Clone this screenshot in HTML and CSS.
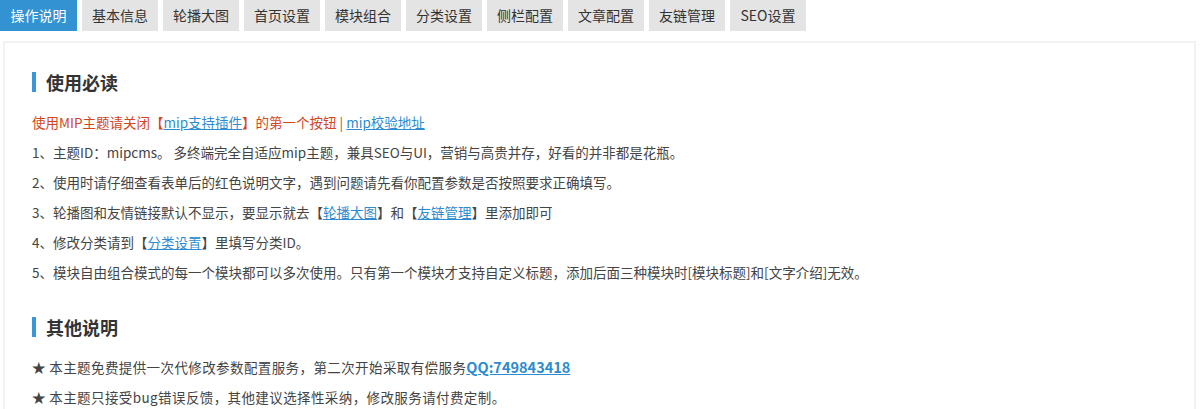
FILE: index.html
```html
<!DOCTYPE html>
<html>
<head>
    <meta charset="utf-8">
    <title>主题设置</title>
    <link rel="stylesheet" href="styles.css">
</head>
<body>
    <div class="tabs">
        <a class="tab active">操作说明</a>
        <a class="tab">基本信息</a>
        <a class="tab">轮播大图</a>
        <a class="tab">首页设置</a>
        <a class="tab">模块组合</a>
        <a class="tab">分类设置</a>
        <a class="tab">侧栏配置</a>
        <a class="tab">文章配置</a>
        <a class="tab">友链管理</a>
        <a class="tab">SEO设置</a>
    </div>
    <div class="panel">
        <h3 class="title">使用必读</h3>
        <p class="warn">使用MIP主题请关闭【<a href="#">mip支持插件</a>】的第一个按钮 | <a href="#">mip校验地址</a></p>
        <p>1、主题ID：mipcms。 多终端完全自适应mip主题，兼具SEO与UI，营销与高贵并存，好看的并非都是花瓶。</p>
        <p>2、使用时请仔细查看表单后的红色说明文字，遇到问题请先看你配置参数是否按照要求正确填写。</p>
        <p>3、轮播图和友情链接默认不显示，要显示就去【<a href="#">轮播大图</a>】和【<a href="#">友链管理</a>】里添加即可</p>
        <p>4、修改分类请到【<a href="#">分类设置</a>】里填写分类ID。</p>
        <p>5、模块自由组合模式的每一个模块都可以多次使用。只有第一个模块才支持自定义标题，添加后面三种模块时[模块标题]和[文字介绍]无效。</p>

        <h3 class="title second">其他说明</h3>
        <p class="note">★ 本主题免费提供一次代修改参数配置服务，第二次开始采取有偿服务<a class="qq" href="#">QQ:749843418</a></p>
        <p class="note">★ 本主题只接受bug错误反馈，其他建议选择性采纳，修改服务请付费定制。</p>
    </div>
</body>
</html>
```

FILE: styles.css
```css
body {
    margin: 0;
    font-family: "Noto Sans CJK SC", "Noto Sans", sans-serif;
    font-size: 13.5px;
    color: #444;
    background-color: #ffffff;
    overflow: hidden;
}

.tabs {
    display: flex;
    gap: 5px;
    height: 31px;
}

.tab {
    display: block;
    width: 76px;
    line-height: 31px;
    text-align: center;
    font-size: 14px;
    color: #333;
    background-color: #e4e4e4;
}

.tab:first-child {
    width: 77px;
}

.tab.active {
    background-color: #3393d2;
    color: #fff;
}

.panel {
    margin: 10px 4px 0 3px;
    border: 2px solid #f2f2f2;
    border-bottom: none;
    padding: 29px 0 0 27px;
    height: 337px;
}

.title {
    margin: 0 0 15px 0;
    border-left: 4px solid #3a97d6;
    padding-left: 10px;
    height: 20px;
    line-height: 20px;
    font-size: 18px;
    font-weight: bold;
    color: #333;
}

.title.second {
    margin-top: 30px;
}

p {
    margin: 0;
    line-height: 30px;
}

.note {
    letter-spacing: 0.4px;
}

.warn {
    color: #d2461d;
}

p a {
    color: #2d8bd0;
    text-decoration: underline;
}

.qq {
    font-weight: bold;
    font-size: 14.5px;
    letter-spacing: 0;
}
```
